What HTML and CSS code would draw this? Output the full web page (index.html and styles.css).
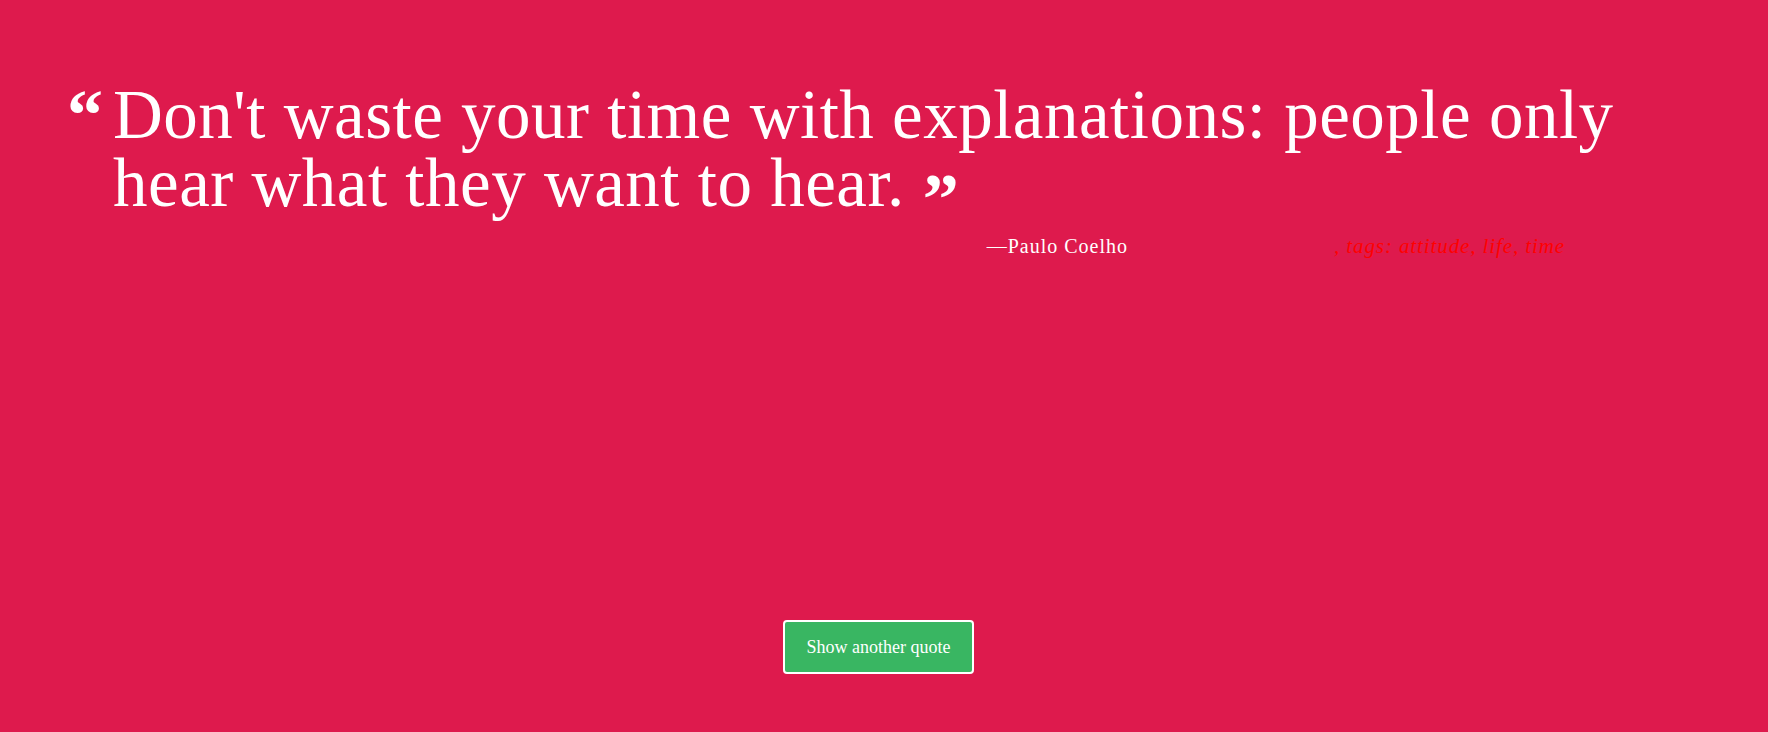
FILE: index.html
```html
<!DOCTYPE html>
<html lang="en">
<head>
<meta charset="utf-8">
<title>Random Quote</title>
<link rel="stylesheet" href="styles.css">
</head>
<body>
<main class="page">
  <section class="quote-box">
    <div class="quote">
      <span class="mark mark-open">“</span>
      <p class="quote-text">Don't waste your time with explanations: people only hear what they want to hear. <span class="mark mark-close">”</span></p>
    </div>
    <div class="meta">
      <span class="author">—Paulo Coelho</span>
      <span class="tags">, tags: attitude, life, time</span>
    </div>
  </section>
  <div class="actions">
    <button class="new-quote" type="button">Show another quote</button>
  </div>
</main>
</body>
</html>
```

FILE: styles.css
```css
html, body {
  margin: 0;
  padding: 0;
  height: 100%;
}

body {
  background: #de1a4d;
  color: #ffffff;
  font-family: "Liberation Serif", "Times New Roman", serif;
  overflow: hidden;
}

.page {
  height: 100vh;
  box-sizing: border-box;
  display: flex;
  flex-direction: column;
  justify-content: space-between;
  padding: 81px 108px 58px 67px;
}

.quote {
  display: flex;
  align-items: flex-start;
  gap: 14px;
}

.mark {
  font-size: 72px;
  font-weight: bold;
  line-height: 68px;
}

.mark-open {
  width: 32px;
  flex: 0 0 32px;
}

.mark-close {
  vertical-align: -17px;
  line-height: 0;
}

.quote-text {
  margin: 0;
  font-size: 69px;
  line-height: 68px;
  letter-spacing: 0.5px;
  flex: 1;
}

.meta {
  display: grid;
  grid-template-columns: 1061px 1fr;
  column-gap: 206px;
  margin-top: 17px;
  font-size: 20px;
  line-height: 24px;
}

.author {
  text-align: right;
  letter-spacing: 1px;
}

.tags {
  color: #ff0000;
  font-style: italic;
  font-size: 21px;
  letter-spacing: 0.9px;
}

.actions {
  display: flex;
  justify-content: center;
  padding: 0 0 0 30px;
}

.new-quote {
  font-family: "Liberation Serif", "Times New Roman", serif;
  font-size: 18px;
  line-height: 21px;
  color: #ffffff;
  background: #39b662;
  border: 2px solid #ffffff;
  border-radius: 4px;
  padding: 15px 22px 14px;
  cursor: pointer;
}
```
